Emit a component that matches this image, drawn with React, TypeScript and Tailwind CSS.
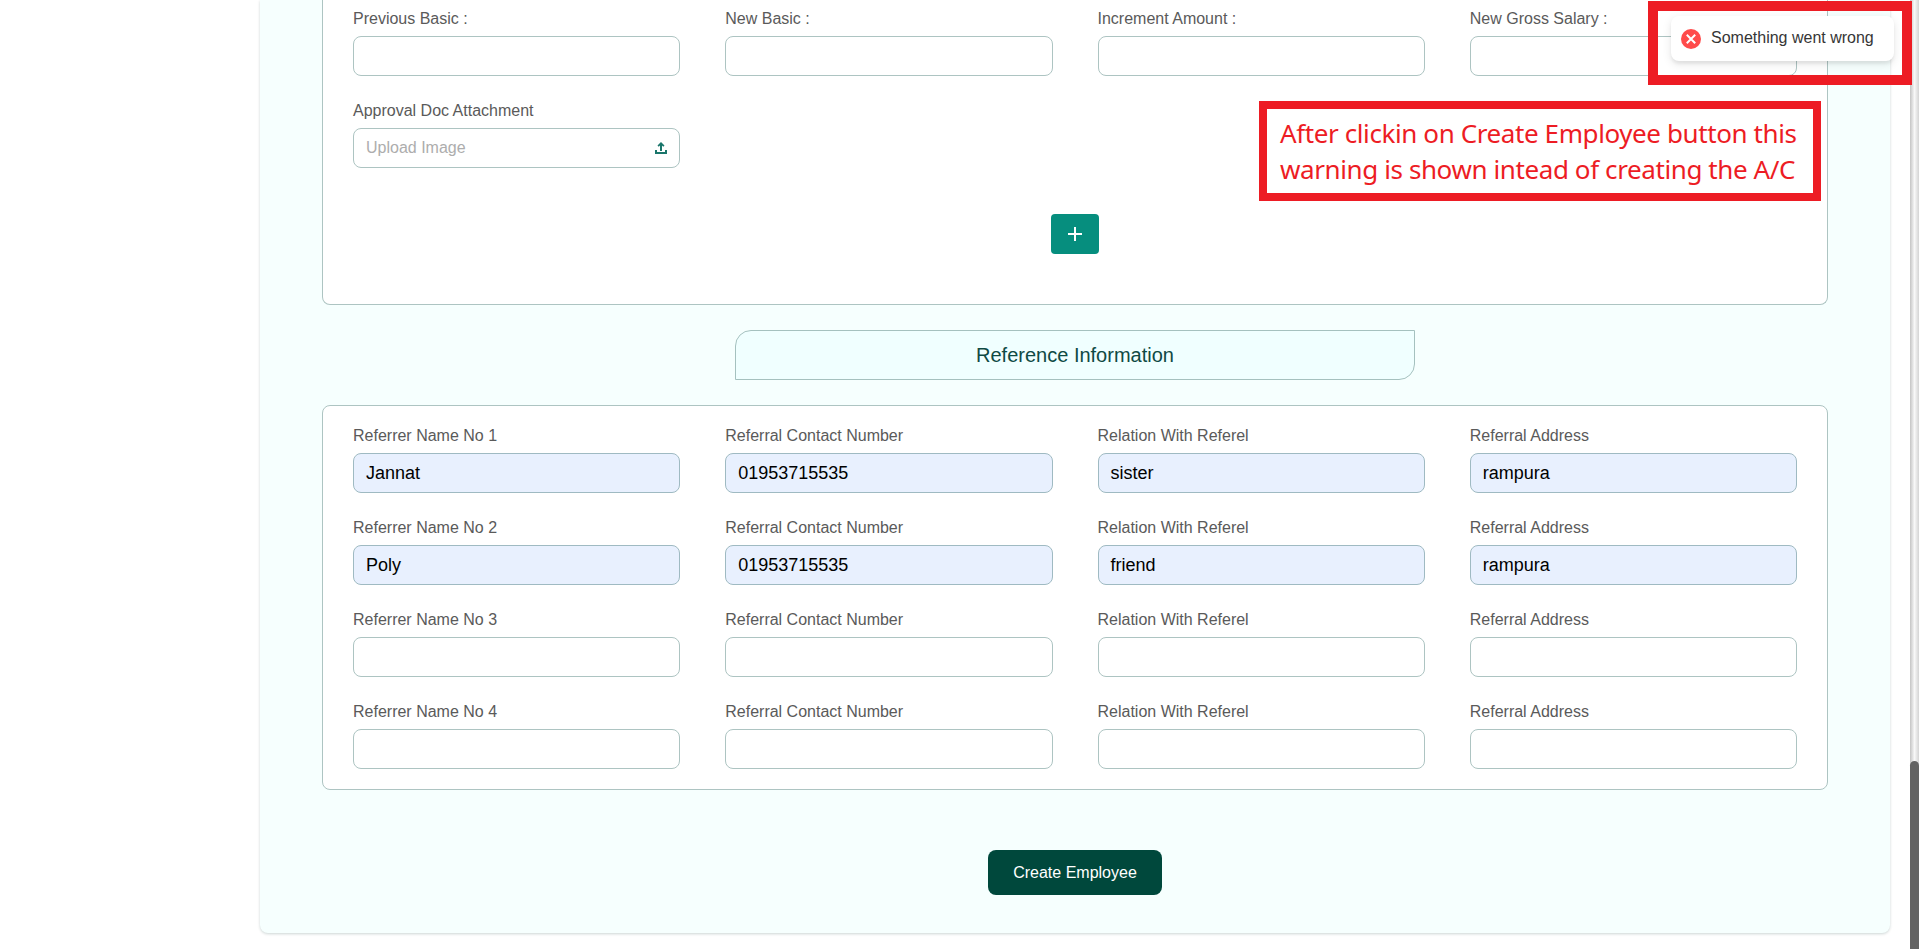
import React from "react";

function Field({ label, value, children }: { label: string; value?: string; children?: React.ReactNode }) {
  return (
    <div className="flex min-w-0 flex-col">
      <label className="mb-[5px] h-6 text-[16px] leading-6 text-[#5a5a5a]">{label}</label>
      <div
        className={
          value
            ? "flex h-10 items-center justify-between rounded-lg border border-[#9fbac2] bg-[#e8f0fe] px-3 text-[18px] text-black"
            : "flex h-10 items-center justify-between rounded-lg border border-[#adc4c2] bg-white px-3 text-[16px] text-[#adadad]"
        }
      >
        {value ? <span>{value}</span> : children}
      </div>
    </div>
  );
}

const referrers = [
  ["Jannat", "01953715535", "sister", "rampura"],
  ["Poly", "01953715535", "friend", "rampura"],
  ["", "", "", ""],
  ["", "", "", ""],
];

export default function App() {
  return (
    <div className="relative flex h-[949px] w-full justify-between overflow-hidden bg-white font-['Liberation_Sans',Arial,sans-serif]">
      <main className="ml-[260px] flex h-[933px] w-[1630px] flex-col items-center rounded-b-lg bg-[#f6fffe] px-[62px] shadow-[0_1px_3px_rgba(0,50,45,0.2)]">
        <section className="h-[305px] w-full shrink-0 rounded-b-lg border border-t-0 border-[#adc4c2] bg-white px-[30px] pt-[7px]">
          <div className="grid grid-cols-4 gap-x-[45px] gap-y-[23px]">
            <Field label="Previous Basic :" />
            <Field label="New Basic :" />
            <Field label="Increment Amount :" />
            <Field label="New Gross Salary :" />
            <Field label="Approval Doc Attachment">
              <span>Upload Image</span>
              <svg className="h-3 w-3" viewBox="0 0 12 12" fill="none" stroke="#1a766b">
                <path d="M1 8V11H11V8" strokeWidth="2" />
                <path d="M6 9V2" strokeWidth="2" />
                <path d="M3.1 4.2L6 1.3L8.9 4.2" strokeWidth="1.7" />
              </svg>
            </Field>
          </div>
          <div className="mt-[46px] flex justify-center">
            <button className="flex h-10 w-12 items-center justify-center rounded bg-[#068e7e]">
              <svg className="h-[14px] w-[14px]" viewBox="0 0 14 14" stroke="white" strokeWidth="2">
                <path d="M7 0V14M0 7H14" />
              </svg>
            </button>
          </div>
        </section>

        <h2 className="mt-[25px] flex h-[50px] w-[680px] shrink-0 items-center justify-center rounded-tl-2xl rounded-br-2xl border border-[#a5c1bf] bg-[#f0ffff] text-[20px] text-[#0f4a44]">
          Reference Information
        </h2>

        <section className="mt-[25px] h-[385px] w-full shrink-0 rounded-lg border border-[#adc4c2] bg-white px-[30px] pt-[18px]">
          <div className="grid grid-cols-4 gap-x-[45px] gap-y-[23px]">
            {referrers.map((row, i) => (
              <React.Fragment key={i}>
                <Field label={`Referrer Name No ${i + 1}`} value={row[0]} />
                <Field label="Referral Contact Number" value={row[1]} />
                <Field label="Relation With Referel" value={row[2]} />
                <Field label="Referral Address" value={row[3]} />
              </React.Fragment>
            ))}
          </div>
        </section>

        <button className="mt-[60px] h-[45px] w-[174px] shrink-0 rounded-lg bg-[#00483c] text-[16px] text-white">
          Create Employee
        </button>
      </main>

      <aside className="flex w-[9px] flex-col justify-end bg-linear-to-r from-[#c4c4c4] via-[#f8f8f8] via-50% to-[#d4d4d4]">
        <div className="h-[188px] rounded-t-full bg-[#636363]" />
      </aside>

      <div className="absolute top-4 left-[1671px] flex h-[45px] w-[223px] items-center rounded-lg bg-white pl-[10px] text-[16px] text-[#363636] shadow-[0_3px_10px_rgba(0,0,0,0.1),0_3px_3px_rgba(0,0,0,0.05)]">
        <svg className="mr-[10px] h-5 w-5" viewBox="0 0 20 20">
          <circle cx="10" cy="10" r="10" fill="#ff4b4b" />
          <path d="M5.8 5.8L14.2 14.2M14.2 5.8L5.8 14.2" stroke="white" strokeWidth="2" />
        </svg>
        <span className="pb-[2px]">Something went wrong</span>
      </div>
      <div className="absolute top-px left-[1648px] h-[84px] w-[264px] border-10 border-[#ed1c24]" />

      <div className="absolute top-[101px] left-[1259px] h-[100px] w-[562px] border-8 border-[#ed1c24] bg-white pt-[6px] pl-[13px] font-['Noto_Sans',sans-serif] text-[26px] leading-9 tracking-[-0.4px] whitespace-nowrap text-[#ed1c24]">
        <p>After clickin on Create Employee button this</p>
        <p>warning is shown intead of creating the A/C</p>
      </div>
    </div>
  );
}
